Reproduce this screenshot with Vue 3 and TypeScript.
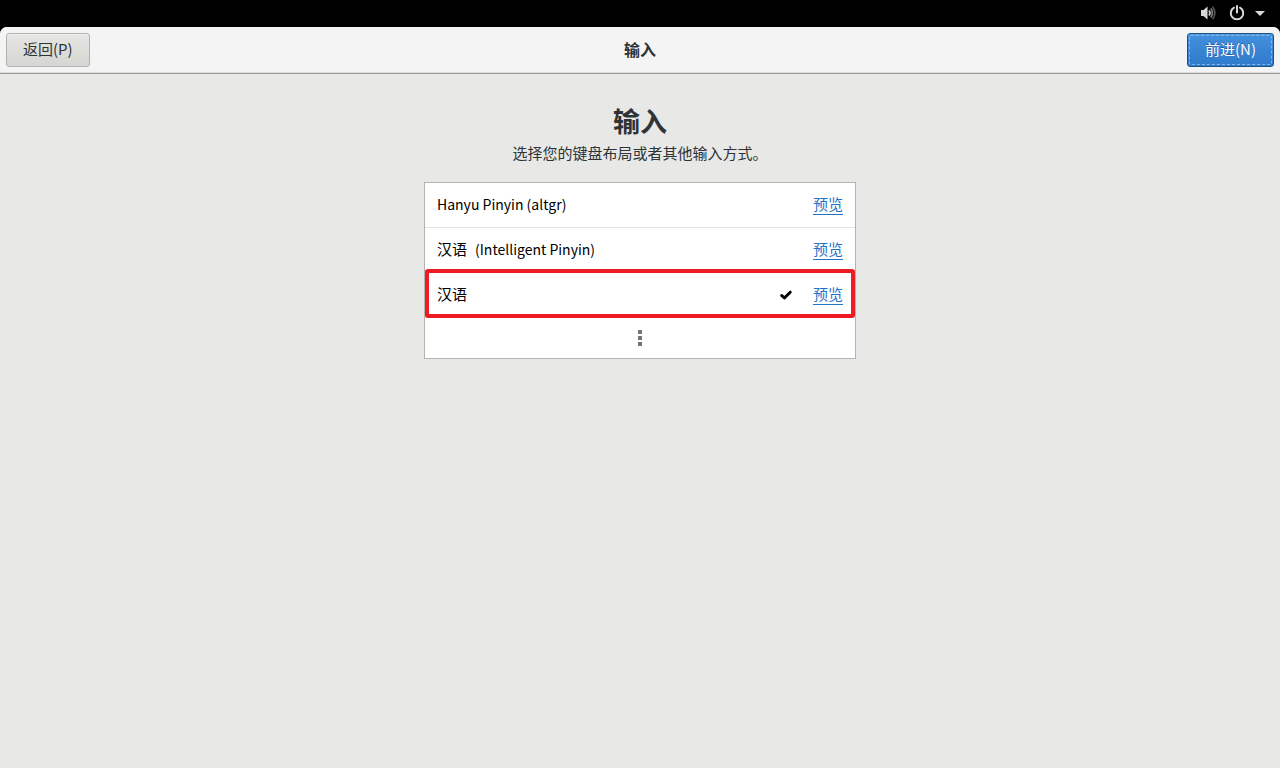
<script setup lang="ts">
import { ref } from 'vue'

interface InputSource {
  id: string
  prefix?: string
  name: string
}

const sources: InputSource[] = [
  { id: 'altgr', name: 'Hanyu Pinyin (altgr)' },
  { id: 'pinyin', prefix: '汉语', name: '(Intelligent Pinyin)' },
  { id: 'han', prefix: '汉语', name: '' },
]

const selected = ref('han')
</script>

<template>
  <div class="screen">
    <div class="topbar">
      <button class="status" type="button" aria-label="音量">
        <svg width="16" height="16" viewBox="0 0 16 16">
          <path d="M1 5h2.5L7.5 1.5v13l-4-3.5H1z" fill="#d8d8d6" />
          <path d="M9 5.5q2 2.5 0 5" fill="none" stroke="#c8c8c6" stroke-width="1.8" />
          <path d="M10.8 3.6q3.4 4.4 0 8.8" fill="none" stroke="#858583" stroke-width="1.6" />
          <path d="M12.6 1.8q4.6 6.2 0 12.4" fill="none" stroke="#555553" stroke-width="1.6" />
        </svg>
      </button>
      <button class="status" type="button" aria-label="电源">
        <svg width="16" height="16" viewBox="0 0 16 16">
          <path d="M5 2.7a6.2 6.2 0 1 0 6 0" fill="none" stroke="#d8d8d6" stroke-width="2" stroke-linecap="round" />
          <path d="M8 1v6.5" stroke="#d8d8d6" stroke-width="2" stroke-linecap="round" />
        </svg>
      </button>
      <button class="status arrow" type="button" aria-label="系统菜单">
        <svg width="10" height="16" viewBox="0 0 10 16">
          <path d="M0 6h10l-5 5z" fill="#d8d8d6" />
        </svg>
      </button>
    </div>

    <div class="window">
      <header class="header">
        <button class="btn" type="button">返回(P)</button>
        <div class="title">输入</div>
        <button class="btn primary" type="button">前进(N)</button>
      </header>

      <main class="content">
        <h1>输入</h1>
        <p>选择您的键盘布局或者其他输入方式。</p>
        <ul class="list">
          <li v-for="s in sources" :key="s.id" class="row" :class="{ marked: s.id === selected }">
            <button class="name" type="button" @click="selected = s.id">
              <span v-if="s.prefix">{{ s.prefix }}</span>
              <span v-if="s.name" class="latin">{{ s.name }}</span>
            </button>
            <svg v-if="s.id === selected" class="check" width="12" height="12" viewBox="0 0 12 12">
              <path d="M1.8 6.6L4.4 9L10.2 3.2" fill="none" stroke="#000" stroke-width="3" stroke-linejoin="round" stroke-linecap="round" />
            </svg>
            <a class="preview" href="#">预览</a>
          </li>
          <li class="row more-row">
            <button class="more" type="button" aria-label="更多">
              <svg width="4" height="16" viewBox="0 0 4 16" fill="#747474">
                <rect width="4" height="4" />
                <rect y="6" width="4" height="4" />
                <rect y="12" width="4" height="4" />
              </svg>
            </button>
          </li>
        </ul>
      </main>
    </div>
  </div>
</template>

<style>
body {
  margin: 0;
  background: #000;
}
</style>

<style scoped>
.screen {
  box-sizing: border-box;
  min-height: 100vh;
  display: flex;
  flex-direction: column;
  background: #000;
  color: #2e3436;
  font-family: "Noto Sans CJK SC", sans-serif;
  font-size: 15px;
  line-height: 22px;
}

button {
  font: inherit;
  color: inherit;
  margin: 0;
  padding: 0;
  border: 0;
  background: none;
}

svg {
  display: block;
}

.topbar {
  box-sizing: border-box;
  height: 27px;
  display: flex;
  align-items: center;
  justify-content: flex-end;
  gap: 13px;
  padding: 0 15px 1px;
}

.arrow {
  margin-left: -3px;
}

.window {
  flex: 1;
  display: flex;
  flex-direction: column;
  background: #e8e8e6;
  border-radius: 7px 7px 0 0;
  overflow: hidden;
}

.header {
  display: grid;
  grid-template-columns: 1fr auto 1fr;
  align-items: center;
  padding: 6px;
  background: #f4f4f4;
  border-bottom: 1px solid #9a9a95;
  box-shadow: inset 0 -1px #dededc;
}

.title {
  padding-bottom: 2px;
  font-weight: 700;
  font-size: 16px;
}

.btn {
  height: 34px;
  padding: 0 16px 2px;
  justify-self: start;
  border: 1px solid #b2b2ae;
  border-radius: 3px;
  background: linear-gradient(#e6e6e4, #d5d5d2);
  box-shadow: inset 0 1px #f0f0ee;
}

.primary {
  padding: 0 17px 2px;
  justify-self: end;
  position: relative;
  color: #fff;
  border-color: #1c5187;
  background: linear-gradient(#4390de, #2f7acb);
  box-shadow: inset 0 1px #5c9fe1;
  text-shadow: 0 -1px #1f5c9c;
}

.primary::after {
  content: "";
  position: absolute;
  inset: 1px;
  border: 1px dashed #83b5e8;
  border-radius: 2px;
}

.content {
  display: flex;
  flex-direction: column;
  align-items: center;
  padding: 27px 16px;
}

h1 {
  margin: 0;
  font-size: 27px;
  line-height: 40px;
  font-weight: 700;
}

p {
  margin: 0;
  padding: 1px 0 18px;
}

.list {
  box-sizing: border-box;
  width: 100%;
  max-width: 432px;
  margin: 0;
  padding: 0;
  list-style: none;
  background: #fff;
  border: 1px solid #b3b3af;
  color: #000;
}

.row {
  display: flex;
  align-items: center;
  height: 44px;
  padding: 0 12px;
  border-bottom: 1px solid #e4e4e4;
  position: relative;
}

.marked::after {
  content: "";
  position: absolute;
  inset: -4px 0 -1px;
  border: 4px solid #ed1c24;
  border-radius: 3px;
  pointer-events: none;
}

.more-row {
  height: 40px;
  padding: 0;
  border-bottom: 0;
}

.name {
  flex: 1;
  display: flex;
  align-items: baseline;
  gap: 8px;
  padding-bottom: 2px;
  text-align: left;
}

.latin {
  font-size: 14px;
}

.check {
  margin-right: 21px;
}

.preview {
  color: #1f74c8;
  line-height: 20px;
  text-decoration: none;
  margin-bottom: 2px;
  border-bottom: 1px solid #1f74c8;
}

.more {
  flex: 1;
  display: flex;
  justify-content: center;
}
</style>
